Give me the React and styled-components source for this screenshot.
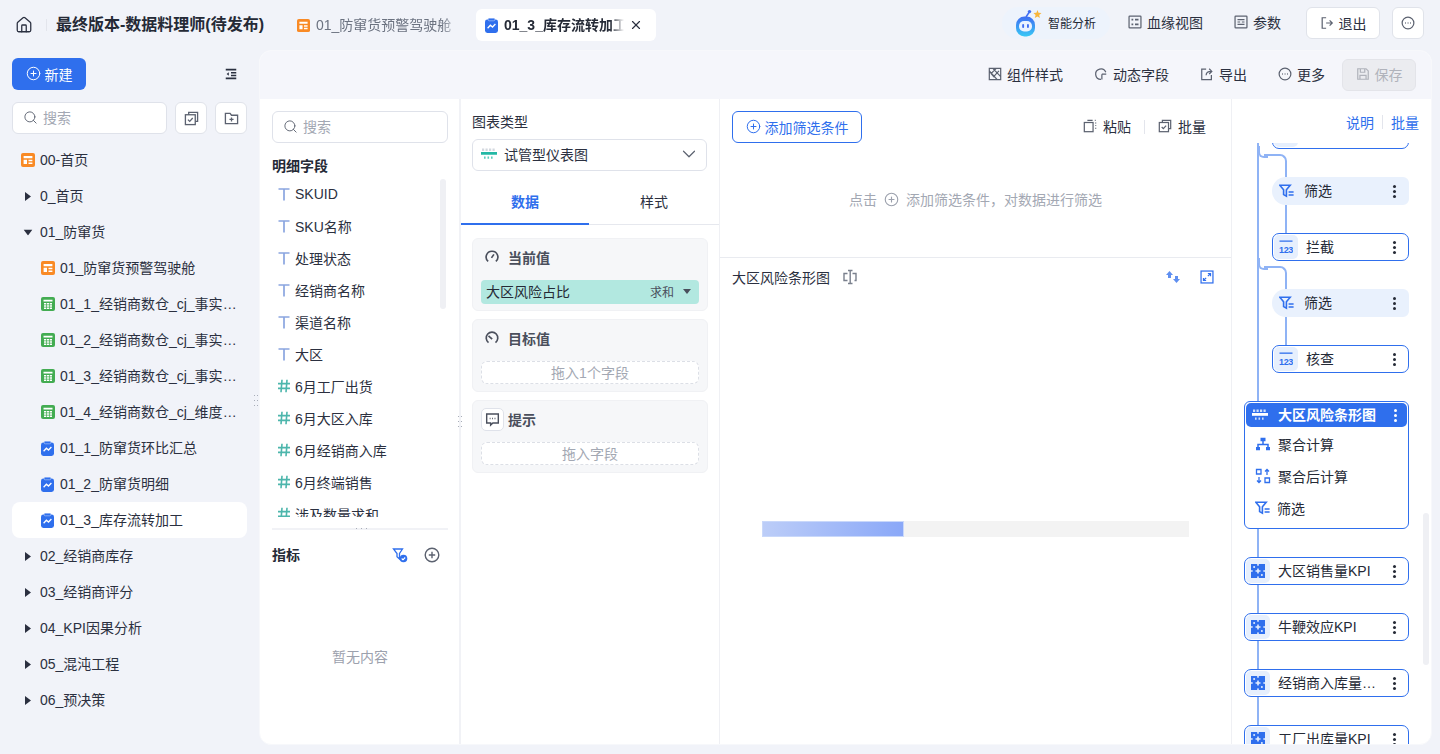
import styled, { createGlobalStyle } from "styled-components";
import { House, Search, CirclePlus, ChevronDown, X } from "lucide-react";

const BLUE = "#2f6fed";
const LINK = "#8fb3f5";

const GlobalStyle = createGlobalStyle`
  html, body { margin: 0; padding: 0; background: #f1f3f9; }
  * { box-sizing: border-box; }
  body {
    font-family: "Liberation Sans", "Noto Sans CJK SC", sans-serif;
    font-size: 14px;
    color: #1f2430;
  }
`;

const Page = styled.div`
  width: 1440px;
  height: 754px;
  display: flex;
  flex-direction: column;
  overflow: hidden;
`;

/* ---------- top header ---------- */
const Header = styled.header`
  height: 50px;
  flex: none;
  display: flex;
  align-items: center;
  padding: 0 16px 0 15px;
`;
const HomeWrap = styled.div`
  display: flex;
  padding-right: 14px;
  margin-right: 9px;
  position: relative;
  color: #2b3040;
  &::after {
    content: "";
    position: absolute;
    right: 0;
    top: 3px;
    bottom: 3px;
    width: 1px;
    background: #e3e5ec;
  }
`;
const Title = styled.h1`
  margin: 0 24px 0 0;
  font-size: 16px;
  font-weight: 700;
  line-height: 22px;
  color: #252a36;
  white-space: nowrap;
`;
const Tab = styled.div`
  width: 180px;
  height: 32px;
  margin-right: 8px;
  padding: 0 9px;
  display: flex;
  align-items: center;
  gap: ${(p) => (p.$active ? 5 : 6)}px;
  border-radius: 6px;
  background: ${(p) => (p.$active ? "#fff" : "transparent")};
  color: ${(p) => (p.$active ? "#252a36" : "#6b7280")};
  font-weight: ${(p) => (p.$active ? 700 : 400)};
`;
const TabText = styled.span`
  flex: 1;
  padding-bottom: 2px;
  white-space: nowrap;
  overflow: hidden;
  -webkit-mask-image: linear-gradient(to right, #000 88%, transparent);
  mask-image: linear-gradient(to right, #000 88%, transparent);
`;
const CloseBtn = styled.span`
  display: flex;
  margin-right: 4px;
  color: #2b3040;
`;
const HeaderRight = styled.div`
  margin-left: auto;
  align-self: flex-start;
  margin-top: 7px;
  height: 32px;
  display: flex;
  align-items: center;
`;
const AiPill = styled.div`
  width: 108px;
  height: 32px;
  padding: 0 0 1px 14px;
  display: flex;
  align-items: center;
  gap: 6px;
  border-radius: 16px;
  background: #edf3fc;
  font-size: 12px;
  color: #252a36;
`;
const HeaderAction = styled.div`
  display: flex;
  align-items: center;
  gap: 5px;
  padding-bottom: 2px;
  margin-left: ${(p) => p.$ml}px;
  color: #2b3040;
`;
const OutlineBtn = styled.div`
  height: 32px;
  width: ${(p) => p.$w}px;
  margin-left: ${(p) => p.$ml}px;
  padding-bottom: 1px;
  display: flex;
  align-items: center;
  justify-content: center;
  gap: 5px;
  background: #fff;
  border: 1px solid #e0e3ea;
  border-radius: 6px;
  color: #2b3040;
`;

/* ---------- layout ---------- */
const Body = styled.div`
  flex: 1;
  min-height: 0;
  display: flex;
`;
const Sidebar = styled.aside`
  width: 259px;
  flex: none;
  padding: 8px 12px 0;
  position: relative;
`;
const NewRow = styled.div`
  display: flex;
  align-items: center;
  justify-content: space-between;
  padding-right: 9px;
`;
const NewBtn = styled.div`
  width: 74px;
  height: 32px;
  padding-bottom: 1px;
  display: flex;
  align-items: center;
  justify-content: center;
  gap: 4px;
  border-radius: 6px;
  background: ${BLUE};
  color: #fff;
`;
const SearchRow = styled.div`
  margin-top: 12px;
  display: flex;
  gap: 8px;
`;
const SearchBox = styled.div`
  flex: 1;
  height: 32px;
  padding: 0 0 2px 10px;
  display: flex;
  align-items: center;
  gap: 5px;
  background: #fff;
  border: 1px solid #dfe2ea;
  border-radius: 6px;
  color: #a3a8b3;
`;
const SquareBtn = styled.div`
  width: 32px;
  height: 32px;
  flex: none;
  display: flex;
  align-items: center;
  justify-content: center;
  background: #fff;
  border: 1px solid #e0e3ea;
  border-radius: 6px;
`;
const NavTree = styled.nav`
  margin-top: 8px;
`;
const NavRow = styled.div`
  height: 36px;
  padding: 0 10px 0 ${(p) => (p.$child ? 29 : 9)}px;
  display: flex;
  align-items: center;
  gap: 5px;
  border-radius: 8px;
  background: ${(p) => (p.$active ? "#fff" : "transparent")};
  color: #2b3040;
`;
const NavText = styled.span`
  flex: 1;
  min-width: 0;
  padding-bottom: 2px;
  white-space: nowrap;
  overflow: hidden;
  text-overflow: ellipsis;
`;
const Caret = styled.span`
  width: 14px;
  flex: none;
  display: flex;
  justify-content: center;
  svg { transform: rotate(${(p) => (p.$open ? 90 : 0)}deg); }
`;
const Dots = styled.span`
  position: absolute;
  width: ${(p) => (p.$wide ? 13 : 5)}px;
  height: ${(p) => (p.$wide ? 7 : 13)}px;
  left: ${(p) => p.$x}px;
  top: ${(p) => p.$y}px;
  background-image: radial-gradient(circle, #a8adb8 0.8px, transparent 1px);
  background-size: ${(p) => (p.$wide ? "5px 7px" : "3px 5px")};
`;

const Main = styled.main`
  flex: 1;
  margin: 0 8px 9px 0;
  background: #fff;
  border: 1px solid #f7f8fb;
  border-radius: 12px;
  overflow: hidden;
  display: flex;
  flex-direction: column;
`;
const Toolbar = styled.div`
  height: 48px;
  flex: none;
  display: flex;
  align-items: center;
  justify-content: flex-end;
  gap: 31px;
  padding-right: 15px;
  background: #f5f6fb;
`;
const ToolItem = styled.div`
  display: flex;
  align-items: center;
  gap: 5px;
  padding-bottom: 3px;
  color: #2b3040;
`;
const SaveBtn = styled.div`
  width: 74px;
  height: 32px;
  margin-left: -14px;
  padding-bottom: 2px;
  display: flex;
  align-items: center;
  justify-content: center;
  gap: 5px;
  background: #ebecf0;
  border: 1px solid #e3e4e9;
  border-radius: 6px;
  color: #b0b3bb;
`;
const Panels = styled.div`
  flex: 1;
  min-height: 0;
  display: flex;
`;

/* ---------- fields panel ---------- */
const FieldsPanel = styled.section`
  width: 201px;
  flex: none;
  padding: 12px 11px 0 12px;
  border-right: 2px solid #f1f2f6;
  position: relative;
`;
const SectionTitle = styled.div`
  margin-top: ${(p) => p.$mt || 0}px;
  font-weight: 700;
  line-height: 20px;
  color: #252a36;
`;
const FieldList = styled.div`
  height: 338px;
  margin: 3px -11px 0 -12px;
  padding-left: 18px;
  overflow: hidden;
  position: relative;
`;
const FieldRow = styled.div`
  height: 32px;
  padding-bottom: 2px;
  display: flex;
  align-items: center;
  gap: 5px;
  color: #2b3040;
`;
const ListThumb = styled.span`
  position: absolute;
  right: ${(p) => p.$right}px;
  top: ${(p) => p.$top}px;
  width: 6px;
  height: ${(p) => p.$h}px;
  border-radius: 3px;
  background: #eff0f4;
`;
const Rule = styled.div`
  height: 2px;
  margin-top: 11px;
  background: #f1f2f6;
`;
const MetricHead = styled.div`
  margin-top: 15px;
  display: flex;
  align-items: center;
  padding-right: 8px;
  gap: 16px;
  ${SectionTitle} { margin-right: auto; }
`;
const EmptyText = styled.div`
  margin-top: 82px;
  text-align: center;
  line-height: 20px;
  color: #9ca1ad;
`;

/* ---------- config panel ---------- */
const ConfigPanel = styled.section`
  width: 259px;
  flex: none;
  border-right: 1px solid #eff0f4;
`;
const ConfigTop = styled.div`
  padding: 13px 12px 0 11px;
`;
const FieldLabel = styled.div`
  line-height: 20px;
  color: #2b3040;
`;
const Select = styled.div`
  margin-top: 7px;
  height: 32px;
  padding: 0 6px 2px 8px;
  display: flex;
  align-items: center;
  gap: 7px;
  border: 1px solid #dfe2ea;
  border-radius: 6px;
  color: #2b3040;
  svg:last-child { margin-left: auto; color: #5c6270; }
`;
const Tabs = styled.div`
  margin-top: 9px;
  height: 45px;
  display: flex;
  border-bottom: 1px solid #e6e8ee;
`;
const TabItem = styled.div`
  flex: ${(p) => (p.$active ? "0 0 128px" : 1)};
  display: flex;
  align-items: center;
  justify-content: center;
  padding-bottom: 2px;
  font-weight: ${(p) => (p.$active ? 700 : 400)};
  color: ${(p) => (p.$active ? BLUE : "#2b3040")};
  border-bottom: 2px solid ${(p) => (p.$active ? BLUE : "transparent")};
  margin-bottom: -1px;
`;
const Wells = styled.div`
  padding: 13px 11px 0;
  display: flex;
  flex-direction: column;
  gap: 8px;
`;
const Well = styled.div`
  height: 73px;
  padding: 7px 8px 0;
  background: #f6f7f9;
  border: 1px solid #f0f1f4;
  border-radius: 6px;
`;
const WellHead = styled.div`
  height: 24px;
  padding: 0 0 2px ${(p) => (p.$boxed ? 0 : 4)}px;
  display: flex;
  align-items: center;
  gap: ${(p) => (p.$boxed ? 4 : 9)}px;
  font-weight: 700;
  color: #4a4f5c;
`;
const BoxedIcon = styled.span`
  width: 23px;
  height: 23px;
  display: flex;
  align-items: center;
  justify-content: center;
  background: #fff;
  border: 1px solid #dfe2ea;
  border-radius: 5px;
`;
const Chip = styled.div`
  margin-top: 10px;
  height: 24px;
  padding: 0 8px 2px 5px;
  display: flex;
  align-items: center;
  border-radius: 4px;
  background: #b2e8e0;
  color: #252a36;
`;
const ChipMeta = styled.span`
  margin-left: auto;
  margin-right: 9px;
  font-size: 12px;
  color: #4a4f5c;
`;
const DropZone = styled.div`
  margin-top: 10px;
  height: 23px;
  padding-bottom: 2px;
  display: flex;
  align-items: center;
  justify-content: center;
  background: #fff;
  border: 1px dashed #dcdfe6;
  border-radius: 6px;
  color: #a3a8b3;
`;

/* ---------- center ---------- */
const Center = styled.section`
  flex: 1;
  min-width: 0;
  display: flex;
  flex-direction: column;
`;
const FilterArea = styled.div`
  height: 159px;
  flex: none;
  padding: 12px 25px 0 12px;
  border-bottom: 1px solid #e9ebf0;
`;
const FilterHead = styled.div`
  display: flex;
  align-items: center;
`;
const AddBtn = styled.div`
  width: 130px;
  height: 32px;
  padding-bottom: 1px;
  display: flex;
  align-items: center;
  justify-content: center;
  gap: 4px;
  border: 1px solid ${BLUE};
  border-radius: 6px;
  color: ${BLUE};
`;
const HeadLinks = styled.div`
  margin-left: auto;
  display: flex;
  align-items: center;
`;
const HeadLink = styled.div`
  display: flex;
  align-items: center;
  gap: 6px;
  padding-bottom: 2px;
  color: #2b3040;
`;
const VSep = styled.span`
  width: 1px;
  height: 14px;
  margin: 0 ${(p) => p.$m}px;
  background: #e3e5ec;
`;
const FilterHint = styled.div`
  margin-top: 46px;
  padding-left: 117px;
  display: flex;
  align-items: center;
  gap: 7px;
  color: #a3a8b3;
`;
const ChartArea = styled.div`
  flex: 1;
  padding: 9px 17px 0 12px;
  display: flex;
  flex-direction: column;
`;
const ChartHead = styled.div`
  height: 20px;
  display: flex;
  align-items: center;
  gap: 12px;
  color: #2b3040;
`;
const ChartTools = styled.div`
  margin-left: auto;
  display: flex;
  gap: 20px;
`;
const BarTrack = styled.div`
  margin: 234px 25px 0 30px;
  height: 16px;
  background: #f3f3f3;
`;
const BarFill = styled.div`
  height: 100%;
  background: linear-gradient(to right, #bccdf8, #8aa8f8);
  border: 1px solid #c9d8fa;
`;

/* ---------- right flow tree ---------- */
const FlowPanel = styled.section`
  width: 200px;
  flex: none;
  display: flex;
  flex-direction: column;
  position: relative;
  border-left: 1px solid #eff0f4;
`;
const FlowLinks = styled.div`
  height: 44px;
  flex: none;
  padding: 1px 12px 0 0;
  display: flex;
  align-items: center;
  justify-content: flex-end;
  color: ${BLUE};
`;
const FlowScroll = styled.div`
  flex: 1;
  min-height: 0;
  overflow: hidden;
  position: relative;
  padding-left: 12px;
  &::before {
    content: "";
    position: absolute;
    left: 25px;
    top: 0;
    bottom: 0;
    width: 2px;
    background: ${LINK};
  }
`;
const Node = styled.div`
  position: relative;
  width: ${(p) => (p.$inner ? 137 : 165)}px;
  height: 28px;
  margin-left: ${(p) => (p.$inner ? 28 : 0)}px;
  margin-top: ${(p) => p.$mt || 0}px;
  padding: 1px 5px 1px 1px;
  display: flex;
  align-items: center;
  background: #fff;
  border: 1px solid ${BLUE};
  border-radius: 7px;
  color: #252a36;
`;
const NodeIcon = styled.span`
  width: 24px;
  height: 100%;
  flex: none;
  display: flex;
  align-items: center;
  justify-content: center;
  background: #e6effd;
  border-radius: 5px;
  margin-right: 8px;
`;
const NodeText = styled.span`
  flex: 1;
  min-width: 0;
  padding-bottom: 2px;
  margin-right: 6px;
  white-space: nowrap;
  overflow: hidden;
  text-overflow: ellipsis;
`;
const Kebab = styled.span`
  width: 18px;
  flex: none;
  display: flex;
  flex-direction: column;
  align-items: center;
  gap: 2px;
  color: ${(p) => (p.$light ? "#fff" : "#252a36")};
  i {
    width: 3px;
    height: 3px;
    border-radius: 50%;
    background: currentColor;
  }
`;
const Pill = styled.div`
  position: relative;
  width: 137px;
  height: 28px;
  margin-left: 28px;
  padding: 0 6px 0 7px;
  display: flex;
  align-items: center;
  gap: 10px;
  background: #e9f1fd;
  border-radius: 14px 6px 6px 14px;
  color: #252a36;
`;
const Elbow = styled.div`
  position: relative;
  width: 23px;
  height: 23px;
  margin: 5px 0 0 20px;
  border-top: 2px solid ${LINK};
  border-right: 2px solid ${LINK};
  border-top-right-radius: 7px;
  &::before {
    content: "";
    position: absolute;
    left: -6px;
    top: -10px;
    width: 8px;
    height: 10px;
    border-left: 2px solid ${LINK};
    border-bottom: 2px solid ${LINK};
    border-bottom-left-radius: 6px;
  }
`;
const InnerLink = styled.div`
  width: 2px;
  height: 28px;
  margin-left: 41px;
  background: ${LINK};
`;
const Spacer = styled.div`
  height: 28px;
`;
const GroupNode = styled.div`
  position: relative;
  width: 165px;
  height: 128px;
  padding: 1px;
  background: #fff;
  border: 1px solid ${BLUE};
  border-radius: 6px;
`;
const GroupHead = styled.div`
  height: 24px;
  padding: 0 3px 0 6px;
  display: flex;
  align-items: center;
  gap: 10px;
  background: ${BLUE};
  border-radius: 5px;
  font-weight: 700;
  color: #fff;
  ${NodeText} { margin-right: -10px; }
`;
const GroupItem = styled.div`
  height: 32px;
  padding: 0 0 2px 9px;
  display: flex;
  align-items: center;
  gap: 7px;
  color: #252a36;
`;
const GroupItems = styled.div`
  padding-top: 2px;
`;
const IconSvg = styled.svg`
  flex: none;
`;

/* ---------- icons ---------- */
const Dash = ({ size = 14 }) => (
  <IconSvg width={size} height={size} viewBox="0 0 14 14">
    <rect width="14" height="14" rx="2" fill="#f98a25" />
    <path d="M2.6 3h8.8v2.2H2.6zM2.6 6.8h3.4v4.2H2.6zM7.5 6.8h3.9v1.5H7.5zM7.5 9.5h3.9V11H7.5z" fill="#fff" />
  </IconSvg>
);
const Sheet = () => (
  <IconSvg width="14" height="14" viewBox="0 0 14 14">
    <rect width="14" height="14" rx="2" fill="#43ac52" />
    <path d="M2.5 2.8h9v1.8h-9zM3 6h2.2v1.5H3zM5.9 6h2.2v1.5H5.9zM8.8 6H11v1.5H8.8zM3 8.3h2.2v1.5H3zM5.9 8.3h2.2v1.5H5.9zM8.8 8.3H11v1.5H8.8zM3 10.5h2.2V12H3zM5.9 10.5h2.2V12H5.9zM8.8 10.5H11V12H8.8z" fill="#fff" />
  </IconSvg>
);
const Board = () => (
  <IconSvg width="14" height="15" viewBox="0 0 14 15">
    <rect y="1.4" width="13" height="13.6" rx="2.4" fill="#2f6fed" />
    <rect x="3.2" y=".2" width="6.6" height="2.6" rx="1" fill="#2f6fed" stroke="#bcd0fa" strokeWidth=".6" />
    <path d="M2.6 10.2l2.8-3 2.1 1.8 2.9-3" fill="none" stroke="#fff" strokeWidth="1.3" />
  </IconSvg>
);
const Robot = () => (
  <IconSvg width="26" height="28" viewBox="0 0 26 28">
    <defs>
      <linearGradient id="robotHead" x1="0" y1="0" x2="0" y2="1">
        <stop offset="0" stopColor="#3f6df2" />
        <stop offset="1" stopColor="#38c8f5" />
      </linearGradient>
    </defs>
    <path d="M10 8l3-4.5" stroke="#3f6df2" strokeWidth="1.5" />
    <circle cx="13.5" cy="2.6" r="1.7" fill="#3f6df2" />
    <path d="M21.5 1l1 2.8 3 .3-2.3 2 .7 3-2.5-1.6-2.6 1.4.8-2.9-2.2-2.1 3-.1z" fill="#f8b63c" />
    <rect x="0" y="7.5" width="19" height="20" rx="8.5" fill="url(#robotHead)" />
    <rect x="3" y="12" width="13" height="10.5" rx="5" fill="#eaf3ff" />
    <rect x="6.2" y="15" width="1.9" height="4" rx=".95" fill="#3f6df2" />
    <rect x="11" y="15" width="1.9" height="4" rx=".95" fill="#3f6df2" />
  </IconSvg>
);
const Line = ({ size = 14, color = "#5c6270", sw = 1.4, children }) => (
  <IconSvg width={size} height={size} viewBox="0 0 16 16" fill="none" stroke={color} strokeWidth={sw}>
    {children}
  </IconSvg>
);
const Lineage = () => (
  <Line>
    <rect x="1.2" y="1.2" width="13.6" height="13.6" rx=".8" />
    <path d="M4 5.3h2M8 5.3h4M4 10.7h2M8 10.7h4" strokeWidth="2" />
  </Line>
);
const Params = () => (
  <Line>
    <rect x="1.2" y="1.2" width="13.6" height="13.6" rx=".8" />
    <path d="M4 5.3h8M4 8h3M9 8h3M4 10.7h8" />
  </Line>
);
const Exit = () => (
  <Line>
    <path d="M7 2H2.5v12H7M7 8h7M11 5l3 3-3 3" />
  </Line>
);
const Batch = ({ size = 15 }) => (
  <Line size={size}>
    <path d="M5 4V1.5h9.5V11H12" />
    <rect x="1.5" y="4" width="10.5" height="10.5" />
    <path d="M4.2 9.2l1.9 1.9 3.2-3.6" />
  </Line>
);
const AddFolder = () => (
  <Line size={15}>
    <path d="M1.5 2.5h5l1.5 2h6.5v9h-13zM8 6.8v4.4M5.8 9h4.4" />
  </Line>
);
const Collapse = () => (
  <Line color="#2b3040" sw={1.8}>
    <path d="M2 3h12M8 6.5h6M8 9.8h6M2 13h12" />
    <path d="M5.5 6L3 8l2.5 2z" fill="#2b3040" stroke="none" />
  </Line>
);
const Style = () => (
  <Line>
    <path d="M1.5 1.5h13v13h-13zM1.5 4.5l9 10M5.5 1.5l9 9.5M9.5 1.5l-6 6 3 3.5 6-6.5" />
  </Line>
);
const Dynamic = () => (
  <Line>
    <path d="M13.5 6A6 6 0 1 0 8 14.2M9 8.2h5M9 8.2v6" />
  </Line>
);
const Export = () => (
  <Line>
    <path d="M7 2.5H2v12h11V9M7 9.5c0-3 2-4.5 6-4.5M10.5 2l3 3-3 3" />
  </Line>
);
const More = () => (
  <Line>
    <circle cx="8" cy="8" r="6.7" />
    <path d="M4.8 8h.9M7.6 8h.9M10.4 8h.9" strokeWidth="1.7" />
  </Line>
);
const Floppy = () => (
  <Line color="#b0b3bb">
    <path d="M2 2h9.5L14 4.5V14H2zM5 2v4h5V2M4.5 14V9.5h7V14" />
  </Line>
);
const Paste = () => (
  <Line>
    <rect x="1.5" y="4" width="10" height="10.5" />
    <path d="M5 1.5h6M13.5 1.5h1M14.5 4v1M14.5 7v1M14.5 10v1" />
  </Line>
);
const Swap = () => (
  <IconSvg width="14" height="14" viewBox="0 0 14 14" fill="#5f8ff0">
    <path d="M3.5 1L7 5H5v3H2V5H0zM10.5 13L7 9h2V6h3v3h2z" />
  </IconSvg>
);
const Expand = () => (
  <Line color={BLUE}>
    <rect x="1.2" y="1.2" width="13.6" height="13.6" />
    <path d="M9 4h3v3M12 4L9 7M7 12H4V9M4 12l3-3" />
  </Line>
);
const Rename = () => (
  <Line size={16} color="#7a808d">
    <path d="M5.5 4.5H2v7h3.5M10.5 4.5H14v7h-1.5M8.2 1.5v13M6 1.5h4.5M6 14.5h4.5" />
  </Line>
);
const FieldT = () => (
  <IconSvg width="12" height="14" viewBox="0 0 12 14" fill="none" stroke="#8aa5e0" strokeWidth="1.7">
    <path d="M.5 2h11M6 2v11.5" />
  </IconSvg>
);
const FieldHash = () => (
  <IconSvg width="12" height="14" viewBox="0 0 12 14" fill="none" stroke="#4db6ac" strokeWidth="1.6">
    <path d="M4 .8L3 13.2M9 .8L8 13.2M0 4.6h12M0 9.4h12" />
  </IconSvg>
);
const FunnelCheck = () => (
  <IconSvg width="16" height="16" viewBox="0 0 16 16" fill="none">
    <path d="M1.5 2h9L7.5 6.5V12L5 9.8V6.5z" stroke={BLUE} strokeWidth="1.3" />
    <circle cx="11.5" cy="11.5" r="3.8" fill={BLUE} />
    <path d="M9.7 11.5l1.3 1.3 2.2-2.3" stroke="#fff" strokeWidth="1.1" />
  </IconSvg>
);
const Gauge = ({ rev }) => (
  <Line color="#4a4f5c" sw={1.9}>
    <path d={rev ? "M4 13.2A6.6 6.6 0 1 1 12 13.2" : "M3.6 13A6.6 6.6 0 0 1 8 1.4a6.6 6.6 0 0 1 4.4 11.6"} />
    <path d={rev ? "M4 5.5l4.2 3.8" : "M7.4 9l2.8-4"} />
  </Line>
);
const Chat = () => (
  <Line size={15} color="#4a4f5c" sw={1.5}>
    <path d="M1.8 2.2h12.4v9.6H8.4L6 14v-2.2H1.8z" />
    <path d="M5 7h.9M7.6 7h.9M10.2 7h.9" strokeWidth="1.5" />
  </Line>
);
const Filter = () => (
  <IconSvg width="15" height="14" viewBox="0 0 15 14" fill="none" stroke={BLUE} strokeWidth="1.6">
    <path d="M.8 1.2h10.4L7.4 5.8v6.4L4.6 10.6V5.8z" />
    <path d="M9.6 8h5M9.6 11h5" strokeWidth="1.3" />
  </IconSvg>
);
const Num = () => (
  <IconSvg width="14" height="16" viewBox="0 0 14 16" fill={BLUE}>
    <path d="M.5 1.5h13v1.3H.5z" />
    <text x="7" y="13.5" textAnchor="middle" fontSize="9" fontWeight="700" letterSpacing="-.3" fontFamily="Liberation Sans">123</text>
  </IconSvg>
);
const Puzzle = () => (
  <IconSvg width="14" height="14" viewBox="0 0 14 14" fill={BLUE}>
    <path d="M0 0h6.2v6.2H0zM7.8 0H14v6.2H7.8zM0 7.8h6.2V14H0zM7.8 7.8H14V14H7.8z" />
    <circle cx="7" cy="3.1" r="1.6" />
    <circle cx="3.1" cy="7" r="1.6" />
    <circle cx="10.9" cy="7" r="1.6" />
    <circle cx="7" cy="10.9" r="1.6" />
    <circle cx="3.1" cy="3.1" r="1" fill="#e6effd" />
    <circle cx="10.9" cy="10.9" r="1" fill="#e6effd" />
  </IconSvg>
);
const BarGauge = ({ light }) => (
  <IconSvg width="16" height="12" viewBox="0 0 16 12">
    <path d="M1 .5h2.2v2.4H1zM4.5.5h2.2v2.4H4.5zM8 .5h2.2v2.4H8zM11.5.5h2.2v2.4h-2.2z" fill={light ? "#cfe0fb" : "#d3d8df"} />
    <path d="M0 4h16v2.8H0z" fill={light ? "#fff" : "#23b8a5"} />
    <path d="M3 8.6h1.6v2.2H3zM6.5 8.6h1.6v2.2H6.5zM10 8.6h1.6v2.2H10z" fill={light ? "#cfe0fb" : "#5ccdbd"} />
  </IconSvg>
);
const Aggregate = () => (
  <IconSvg width="16" height="14" viewBox="0 0 16 14" fill="none" stroke={BLUE} strokeWidth="1.5">
    <path d="M8 3v5M3 11V7.5h10V11" />
    <path d="M5.5.8h5v3.4h-5zM1 10h4v3.2H1zM11 10h4v3.2h-4z" fill={BLUE} stroke="none" />
  </IconSvg>
);
const AfterAgg = () => (
  <IconSvg width="16" height="16" viewBox="0 0 16 16" fill="none" stroke={BLUE} strokeWidth="1.3">
    <path d="M1.5 1.5h4.5v4.5H1.5zM10 10h4.5v4.5H10zM12 7V1.5M10 3.5l2-2 2 2M4 9v5.5M2 12.5l2 2 2-2" />
  </IconSvg>
);
const Triangle = () => (
  <IconSvg width="6" height="9" viewBox="0 0 6 9" fill="#2b3040">
    <path d="M0 0l6 4.5L0 9z" />
  </IconSvg>
);
const Down = () => (
  <IconSvg width="8" height="5" viewBox="0 0 8 5" fill="#4a4f5c">
    <path d="M0 0h8L4 5z" />
  </IconSvg>
);

const tree = [
  { label: "00-首页", icon: <Dash /> },
  { label: "0_首页", caret: true },
  { label: "01_防窜货", caret: true, open: true },
  { label: "01_防窜货预警驾驶舱", icon: <Dash />, child: true },
  { label: "01_1_经销商数仓_cj_事实表汇总", icon: <Sheet />, child: true },
  { label: "01_2_经销商数仓_cj_事实表明细", icon: <Sheet />, child: true },
  { label: "01_3_经销商数仓_cj_事实表加工", icon: <Sheet />, child: true },
  { label: "01_4_经销商数仓_cj_维度表汇总", icon: <Sheet />, child: true },
  { label: "01_1_防窜货环比汇总", icon: <Board />, child: true },
  { label: "01_2_防窜货明细", icon: <Board />, child: true },
  { label: "01_3_库存流转加工", icon: <Board />, child: true, active: true },
  { label: "02_经销商库存", caret: true },
  { label: "03_经销商评分", caret: true },
  { label: "04_KPI因果分析", caret: true },
  { label: "05_混沌工程", caret: true },
  { label: "06_预决策", caret: true },
];

const fields = [
  ["T", "SKUID"],
  ["T", "SKU名称"],
  ["T", "处理状态"],
  ["T", "经销商名称"],
  ["T", "渠道名称"],
  ["T", "大区"],
  ["#", "6月工厂出货"],
  ["#", "6月大区入库"],
  ["#", "6月经销商入库"],
  ["#", "6月终端销售"],
  ["#", "涉及数量求和"],
];

const kpis = ["大区销售量KPI", "牛鞭效应KPI", "经销商入库量KPI汇总", "工厂出库量KPI"];

const KebabDots = ({ light }) => (
  <Kebab $light={light}>
    <i />
    <i />
    <i />
  </Kebab>
);

function FlowNode({ icon, label, inner, mt }) {
  return (
    <Node $inner={inner} $mt={mt}>
      <NodeIcon>{icon}</NodeIcon>
      <NodeText>{label}</NodeText>
      <KebabDots />
    </Node>
  );
}

function FilterPill() {
  return (
    <Pill>
      <Filter />
      <NodeText>筛选</NodeText>
      <KebabDots />
    </Pill>
  );
}

function App() {
  return (
    <Page>
      <GlobalStyle />
      <Header>
        <HomeWrap>
          <House size={18} strokeWidth={1.7} />
        </HomeWrap>
        <Title>最终版本-数据料理师(待发布)</Title>
        <Tab>
          <Dash size={13} />
          <TabText>01_防窜货预警驾驶舱</TabText>
        </Tab>
        <Tab $active>
          <Board />
          <TabText>01_3_库存流转加工</TabText>
          <CloseBtn>
            <X size={14} strokeWidth={2} />
          </CloseBtn>
        </Tab>
        <HeaderRight>
          <AiPill>
            <Robot />
            智能分析
          </AiPill>
          <HeaderAction $ml={18}>
            <Lineage />
            血缘视图
          </HeaderAction>
          <HeaderAction $ml={31}>
            <Params />
            参数
          </HeaderAction>
          <OutlineBtn $w={74} $ml={25}>
            <Exit />
            退出
          </OutlineBtn>
          <OutlineBtn $w={32} $ml={12}>
            <More />
          </OutlineBtn>
        </HeaderRight>
      </Header>

      <Body>
        <Sidebar>
          <NewRow>
            <NewBtn>
              <CirclePlus size={15} strokeWidth={1.6} />
              新建
            </NewBtn>
            <Collapse />
          </NewRow>
          <SearchRow>
            <SearchBox>
              <Search size={15} color="#5c6270" strokeWidth={1.5} />
              搜索
            </SearchBox>
            <SquareBtn>
              <Batch />
            </SquareBtn>
            <SquareBtn>
              <AddFolder />
            </SquareBtn>
          </SearchRow>
          <NavTree>
            {tree.map((row) => (
              <NavRow key={row.label} $child={row.child} $active={row.active}>
                {row.caret ? (
                  <Caret $open={row.open}>
                    <Triangle />
                  </Caret>
                ) : (
                  row.icon
                )}
                <NavText>{row.label}</NavText>
              </NavRow>
            ))}
          </NavTree>
          <Dots $x={253} $y={343} />
        </Sidebar>

        <Main>
          <Toolbar>
            <ToolItem>
              <Style />
              组件样式
            </ToolItem>
            <ToolItem>
              <Dynamic />
              动态字段
            </ToolItem>
            <ToolItem>
              <Export />
              导出
            </ToolItem>
            <ToolItem>
              <More />
              更多
            </ToolItem>
            <SaveBtn>
              <Floppy />
              保存
            </SaveBtn>
          </Toolbar>

          <Panels>
            <FieldsPanel>
              <SearchBox>
                <Search size={15} color="#5c6270" strokeWidth={1.5} />
                搜索
              </SearchBox>
              <SectionTitle $mt={13}>明细字段</SectionTitle>
              <FieldList>
                {fields.map(([kind, name]) => (
                  <FieldRow key={name}>
                    {kind === "T" ? <FieldT /> : <FieldHash />}
                    {name}
                  </FieldRow>
                ))}
                <ListThumb $right={13} $top={0} $h={130} />
              </FieldList>
              <Rule />
              <MetricHead>
                <SectionTitle>指标</SectionTitle>
                <FunnelCheck />
                <Line size={16} sw={1.4}>
                  <circle cx="8" cy="8" r="6.8" />
                  <path d="M8 4.8v6.4M4.8 8h6.4" />
                </Line>
              </MetricHead>
              <EmptyText>暂无内容</EmptyText>
              <Dots $x={94} $y={426} $wide />
              <Dots $x={197} $y={315} />
            </FieldsPanel>

            <ConfigPanel>
              <ConfigTop>
                <FieldLabel>图表类型</FieldLabel>
                <Select>
                  <BarGauge />
                  试管型仪表图
                  <ChevronDown size={22} strokeWidth={1.3} />
                </Select>
              </ConfigTop>
              <Tabs>
                <TabItem $active>数据</TabItem>
                <TabItem>样式</TabItem>
              </Tabs>
              <Wells>
                <Well>
                  <WellHead>
                    <Gauge />
                    当前值
                  </WellHead>
                  <Chip>
                    大区风险占比
                    <ChipMeta>求和</ChipMeta>
                    <Down />
                  </Chip>
                </Well>
                <Well>
                  <WellHead>
                    <Gauge rev />
                    目标值
                  </WellHead>
                  <DropZone>拖入1个字段</DropZone>
                </Well>
                <Well>
                  <WellHead $boxed>
                    <BoxedIcon>
                      <Chat />
                    </BoxedIcon>
                    提示
                  </WellHead>
                  <DropZone>拖入字段</DropZone>
                </Well>
              </Wells>
            </ConfigPanel>

            <Center>
              <FilterArea>
                <FilterHead>
                  <AddBtn>
                    <CirclePlus size={15} strokeWidth={1.6} />
                    添加筛选条件
                  </AddBtn>
                  <HeadLinks>
                    <HeadLink>
                      <Paste />
                      粘贴
                    </HeadLink>
                    <VSep $m={13} />
                    <HeadLink>
                      <Batch size={14} />
                      批量
                    </HeadLink>
                  </HeadLinks>
                </FilterHead>
                <FilterHint>
                  点击
                  <CirclePlus size={15} strokeWidth={1.8} color="#9ca1ad" />
                  添加筛选条件，对数据进行筛选
                </FilterHint>
              </FilterArea>
              <ChartArea>
                <ChartHead>
                  大区风险条形图
                  <Rename />
                  <ChartTools>
                    <Swap />
                    <Expand />
                  </ChartTools>
                </ChartHead>
                <BarTrack>
                  <BarFill style={{ width: "33.2%" }} />
                </BarTrack>
              </ChartArea>
            </Center>

            <FlowPanel>
              <FlowLinks>
                说明
                <VSep $m={8} />
                批量
              </FlowLinks>
              <FlowScroll>
                <FlowNode inner mt={-22} label="" icon={<Num />} />
                <Elbow />
                <FilterPill />
                <InnerLink />
                <FlowNode inner label="拦截" icon={<Num />} />
                <Elbow />
                <FilterPill />
                <InnerLink />
                <FlowNode inner label="核查" icon={<Num />} />
                <Spacer />
                <GroupNode>
                  <GroupHead>
                    <BarGauge light />
                    <NodeText>大区风险条形图</NodeText>
                    <KebabDots light />
                  </GroupHead>
                  <GroupItems>
                    <GroupItem>
                      <Aggregate />
                      聚合计算
                    </GroupItem>
                    <GroupItem>
                      <AfterAgg />
                      聚合后计算
                    </GroupItem>
                    <GroupItem>
                      <Filter />
                      筛选
                    </GroupItem>
                  </GroupItems>
                </GroupNode>
                {kpis.map((label) => (
                  <FlowNode key={label} mt={28} label={label} icon={<Puzzle />} />
                ))}
              </FlowScroll>
              <ListThumb $right={2} $top={414} $h={152} />
            </FlowPanel>
          </Panels>
        </Main>
      </Body>
    </Page>
  );
}

export default App;
